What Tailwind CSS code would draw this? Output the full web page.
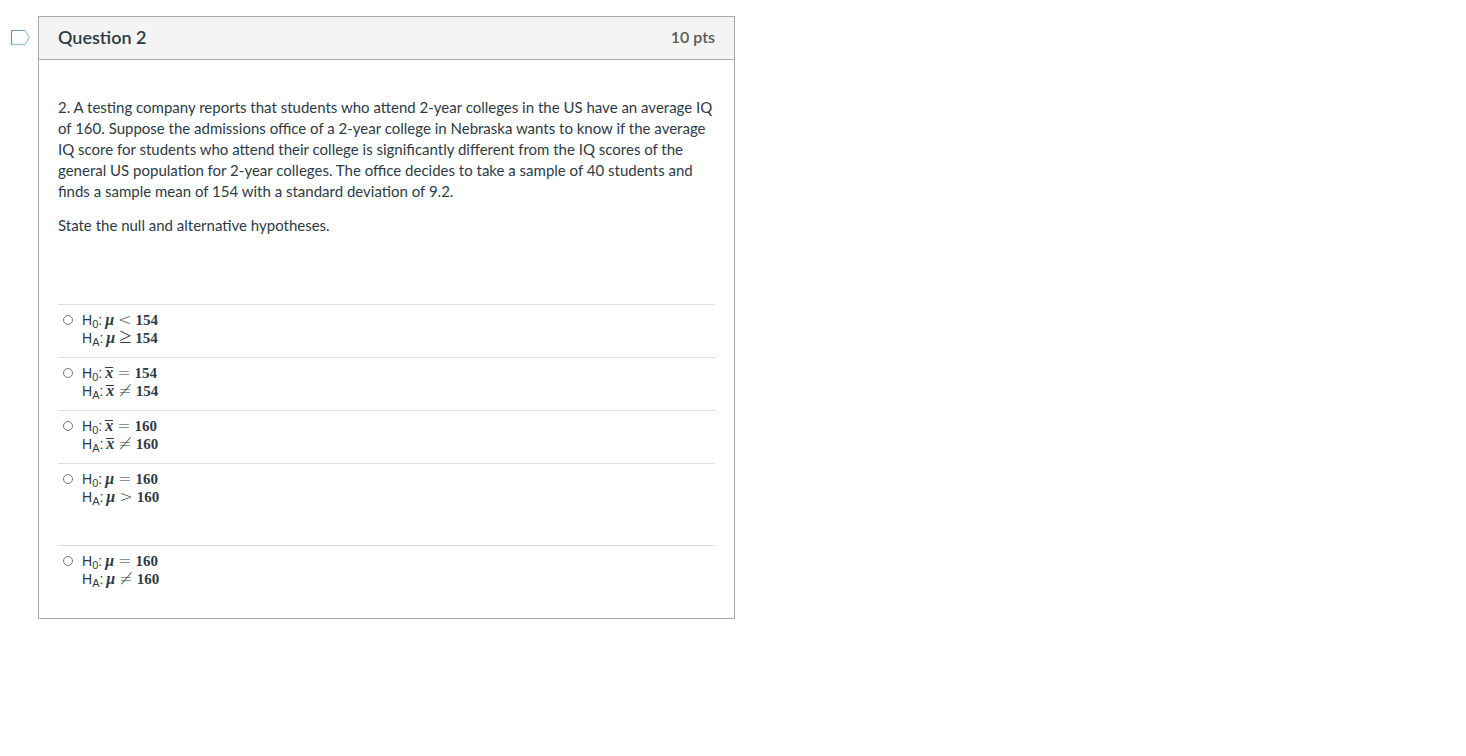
<!DOCTYPE html>
<html lang="en">
  <head>
    <meta charset="UTF-8" />
    <meta name="viewport" content="width=device-width, initial-scale=1.0" />
    <title>Quiz — Question 2</title>
    <script src="https://cdn.jsdelivr.net/npm/@tailwindcss/browser@4"></script>
  </head>
  <body class="bg-white text-[#2d3b45] font-['Lato',sans-serif]">
    <main class="flex items-start w-full max-w-[735px] pt-4">
      <!-- Flag toggle -->
      <button type="button" aria-label="Flag question" class="w-[38px] shrink-0 pl-[10px] pt-3">
        <svg class="w-5 h-[18px]" viewBox="0 0 20 18" fill="none">
          <path d="M15 2.5L19.3 9.5L15 16.5H1" stroke="#a9c3d1" stroke-width="1.3" />
          <path d="M1.5 17V2.5H15" stroke="#6f97b1" stroke-width="1.2" />
        </svg>
      </button>

      <section class="grow min-w-0 border border-[#aaaaaa] pb-5">
        <header class="flex items-center justify-between h-[43px] px-[19px] pb-[3px] bg-[#f4f4f4] border-b border-[#aaaaaa]">
          <h1 class="text-[18px] leading-6 font-semibold">Question 2</h1>
          <span class="text-[16px] leading-6 font-semibold text-[#595959]">10 pts</span>
        </header>

        <div class="px-[19px] pt-[37px]">
          <!-- Question text -->
          <div class="text-[15px] leading-[21px] space-y-[13px]">
            <p>2. A testing company reports that students who attend 2-year colleges in the US have an average IQ of 160. Suppose the admissions office of a 2-year college in Nebraska wants to know if the average IQ score for students who attend their college is significantly different from the IQ scores of the general US population for 2-year colleges. The office decides to take a sample of 40 students and finds a sample mean of 154 with a standard deviation of 9.2.</p>
            <p>State the null and alternative hypotheses.</p>
          </div>

          <!-- Answers -->
          <fieldset aria-label="Answers" class="mt-[68px] text-[14px] leading-[18px] font-['Liberation_Sans',sans-serif]">
            <div class="flex items-start border-t border-[#dddddd] pt-[6px] pb-[10px]">
              <input type="radio" name="answer" id="a1" class="appearance-none w-[10px] h-[10px] ml-[5px] mr-[9px] mt-1 rounded-full border border-[#767676] checked:bg-[#767676]" />
              <label for="a1">
                <span class="flex items-baseline h-[18px]">H<sub class="text-[11px] leading-none">0</sub>:<span class="flex items-baseline gap-1 ml-[3px] leading-none"><b class="italic text-[16px] leading-none font-['Liberation_Serif',serif]">μ</b><span class="text-[16px] leading-none font-extralight font-['DejaVu_Sans',sans-serif]">&lt;</span><b class="text-[15px] leading-none font-['Liberation_Serif',serif]">154</b></span></span>
                <span class="flex items-baseline h-[18px]">H<sub class="text-[11px] leading-none">A</sub>:<span class="flex items-baseline gap-1 ml-[3px] leading-none"><b class="italic text-[16px] leading-none font-['Liberation_Serif',serif]">μ</b><span class="text-[22px] leading-[12px] font-['Liberation_Serif',serif]">≥</span><b class="text-[15px] leading-none font-['Liberation_Serif',serif]">154</b></span></span>
              </label>
            </div>

            <div class="flex items-start border-t border-[#dddddd] pt-[6px] pb-[10px]">
              <input type="radio" name="answer" id="a2" class="appearance-none w-[10px] h-[10px] ml-[5px] mr-[9px] mt-1 rounded-full border border-[#767676] checked:bg-[#767676]" />
              <label for="a2">
                <span class="flex items-baseline h-[18px]">H<sub class="text-[11px] leading-none">0</sub>:<span class="flex items-baseline gap-1 ml-[3px] leading-none"><b class="italic text-[16px] leading-[9px] border-t border-current font-['Liberation_Serif',serif]">x</b><span class="text-[16px] leading-none font-extralight font-['DejaVu_Sans',sans-serif]">=</span><b class="text-[15px] leading-none font-['Liberation_Serif',serif]">154</b></span></span>
                <span class="flex items-baseline h-[18px]">H<sub class="text-[11px] leading-none">A</sub>:<span class="flex items-baseline gap-1 ml-[3px] leading-none"><b class="italic text-[16px] leading-[9px] border-t border-current font-['Liberation_Serif',serif]">x</b><span class="text-[16px] leading-none font-extralight font-['DejaVu_Sans',sans-serif]">≠</span><b class="text-[15px] leading-none font-['Liberation_Serif',serif]">154</b></span></span>
              </label>
            </div>

            <div class="flex items-start border-t border-[#dddddd] pt-[6px] pb-[10px]">
              <input type="radio" name="answer" id="a3" class="appearance-none w-[10px] h-[10px] ml-[5px] mr-[9px] mt-1 rounded-full border border-[#767676] checked:bg-[#767676]" />
              <label for="a3">
                <span class="flex items-baseline h-[18px]">H<sub class="text-[11px] leading-none">0</sub>:<span class="flex items-baseline gap-1 ml-[3px] leading-none"><b class="italic text-[16px] leading-[9px] border-t border-current font-['Liberation_Serif',serif]">x</b><span class="text-[16px] leading-none font-extralight font-['DejaVu_Sans',sans-serif]">=</span><b class="text-[15px] leading-none font-['Liberation_Serif',serif]">160</b></span></span>
                <span class="flex items-baseline h-[18px]">H<sub class="text-[11px] leading-none">A</sub>:<span class="flex items-baseline gap-1 ml-[3px] leading-none"><b class="italic text-[16px] leading-[9px] border-t border-current font-['Liberation_Serif',serif]">x</b><span class="text-[16px] leading-none font-extralight font-['DejaVu_Sans',sans-serif]">≠</span><b class="text-[15px] leading-none font-['Liberation_Serif',serif]">160</b></span></span>
              </label>
            </div>

            <div class="flex items-start border-t border-[#dddddd] pt-[6px] pb-[39px]">
              <input type="radio" name="answer" id="a4" class="appearance-none w-[10px] h-[10px] ml-[5px] mr-[9px] mt-1 rounded-full border border-[#767676] checked:bg-[#767676]" />
              <label for="a4">
                <span class="flex items-baseline h-[18px]">H<sub class="text-[11px] leading-none">0</sub>:<span class="flex items-baseline gap-1 ml-[3px] leading-none"><b class="italic text-[16px] leading-none font-['Liberation_Serif',serif]">μ</b><span class="text-[16px] leading-none font-extralight font-['DejaVu_Sans',sans-serif]">=</span><b class="text-[15px] leading-none font-['Liberation_Serif',serif]">160</b></span></span>
                <span class="flex items-baseline h-[18px]">H<sub class="text-[11px] leading-none">A</sub>:<span class="flex items-baseline gap-1 ml-[3px] leading-none"><b class="italic text-[16px] leading-none font-['Liberation_Serif',serif]">μ</b><span class="text-[16px] leading-none font-extralight font-['DejaVu_Sans',sans-serif]">&gt;</span><b class="text-[15px] leading-none font-['Liberation_Serif',serif]">160</b></span></span>
              </label>
            </div>

            <div class="flex items-start border-t border-[#dddddd] pt-[6px] pb-[10px]">
              <input type="radio" name="answer" id="a5" class="appearance-none w-[10px] h-[10px] ml-[5px] mr-[9px] mt-1 rounded-full border border-[#767676] checked:bg-[#767676]" />
              <label for="a5">
                <span class="flex items-baseline h-[18px]">H<sub class="text-[11px] leading-none">0</sub>:<span class="flex items-baseline gap-1 ml-[3px] leading-none"><b class="italic text-[16px] leading-none font-['Liberation_Serif',serif]">μ</b><span class="text-[16px] leading-none font-extralight font-['DejaVu_Sans',sans-serif]">=</span><b class="text-[15px] leading-none font-['Liberation_Serif',serif]">160</b></span></span>
                <span class="flex items-baseline h-[18px]">H<sub class="text-[11px] leading-none">A</sub>:<span class="flex items-baseline gap-1 ml-[3px] leading-none"><b class="italic text-[16px] leading-none font-['Liberation_Serif',serif]">μ</b><span class="text-[16px] leading-none font-extralight font-['DejaVu_Sans',sans-serif]">≠</span><b class="text-[15px] leading-none font-['Liberation_Serif',serif]">160</b></span></span>
              </label>
            </div>
          </fieldset>
        </div>
      </section>
    </main>
  </body>
</html>
